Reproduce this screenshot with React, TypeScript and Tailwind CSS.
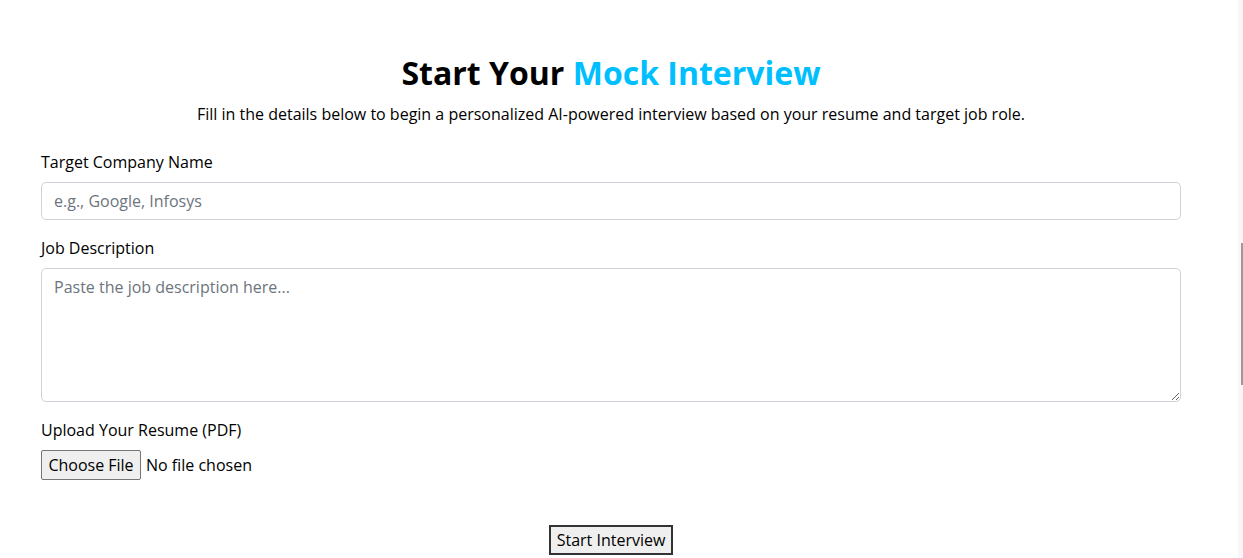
import React from 'react';

export default function App() {
  return (
    <div className="relative w-[1243px] h-[558px] overflow-hidden bg-white text-[#212529] font-['Open_Sans',sans-serif]">
      <div className="w-[1140px] ml-[41px] pt-[54px]">
        <h1 className="text-center text-[32px] font-bold leading-[1.2] text-black">
          Start Your <span className="text-[#00bfff]">Mock Interview</span>
        </h1>
        <p className="text-center text-base leading-6 mt-[10px] text-black">
          Fill in the details below to begin a personalized AI-powered interview based on your resume and target job role.
        </p>

        <form className="mt-6">
          <div className="mb-4">
            <label className="block mb-2 text-base leading-6 text-black">Target Company Name</label>
            <input
              type="text"
              placeholder="e.g., Google, Infosys"
              className="block w-full h-[38px] px-3 py-1.5 text-base border border-[#ced4da] rounded-[5px] bg-white placeholder:text-[#6c757d] outline-none"
            />
          </div>

          <div className="mb-4">
            <label className="block mb-2 text-base leading-6 text-black">Job Description</label>
            <textarea
              placeholder="Paste the job description here..."
              className="block w-full h-[134px] px-3 py-1.5 text-base leading-6 border border-[#ced4da] rounded-[5px] bg-white placeholder:text-[#6c757d] outline-none resize-y"
            />
          </div>

          <div>
            <label className="block mb-2 text-base leading-6 text-black">Upload Your Resume (PDF)</label>
            <div className="flex items-center h-[30px] text-black">
              <button
                type="button"
                className="h-[30px] w-[100px] border border-[#767676] rounded-[2px] bg-[#efefef] text-base leading-6"
              >
                Choose File
              </button>
              <span className="ml-[5px] text-base">No file chosen</span>
            </div>
          </div>

          <div className="flex justify-center mt-[45px]">
            <button
              type="button"
              className="h-[30px] px-[6px] border-2 border-[#333] bg-[#efefef] text-base leading-6 text-black"
            >
              Start Interview
            </button>
          </div>
        </form>
      </div>

      {/* scrollbar strip on the right edge */}
      <div className="absolute top-0 right-0 w-[5px] h-full bg-[#f7f7f7]">
        <div className="absolute top-[243px] right-0 w-[2px] h-[142px] bg-[#9a9a9a]" />
      </div>
    </div>
  );
}
